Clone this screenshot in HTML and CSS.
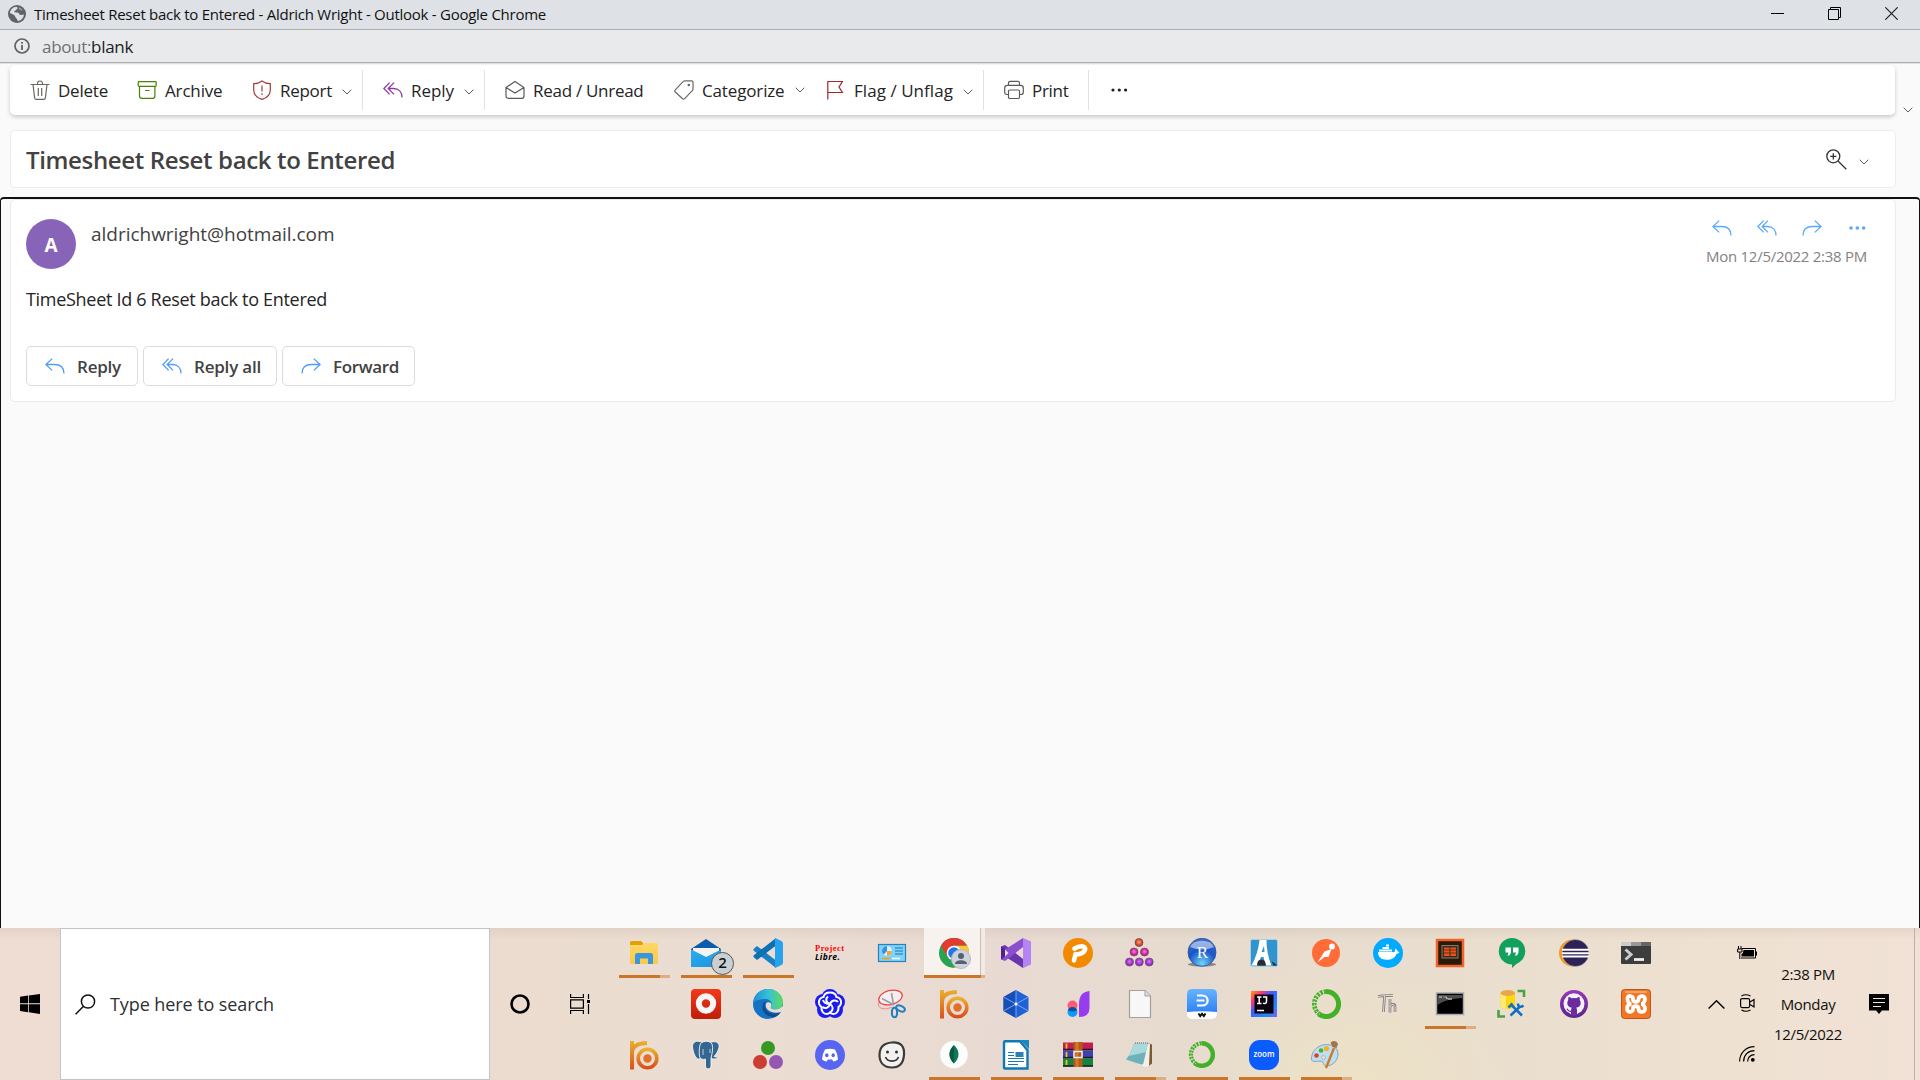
FILE: index.html
```html
<!DOCTYPE html>
<html lang="en">
<head>
<meta charset="utf-8">
<title>Timesheet Reset back to Entered - Aldrich Wright - Outlook</title>
<link rel="stylesheet" href="styles.css">
</head>
<body>
<svg width="0" height="0" class="defs">
  <defs>
    <linearGradient id="g-orange" x1="0" y1="0" x2="0" y2="1"><stop offset="0" stop-color="#e9b02e"/><stop offset="1" stop-color="#d9501e"/></linearGradient>
    <linearGradient id="g-folder" x1="0" y1="0" x2="0" y2="1"><stop offset="0" stop-color="#ffd766"/><stop offset="1" stop-color="#fbc94a"/></linearGradient>
    <linearGradient id="g-edge" x1="0" y1="0" x2="1" y2="0"><stop offset="0" stop-color="#1f8fd6"/><stop offset=".5" stop-color="#35c1d8"/><stop offset="1" stop-color="#5fdc5a"/></linearGradient>
    <linearGradient id="g-ij" x1="0" y1="0" x2="1" y2="1"><stop offset="0" stop-color="#fc9a1d"/><stop offset=".22" stop-color="#fe3867"/><stop offset=".42" stop-color="#3b5fff"/><stop offset=".75" stop-color="#1b8bff"/><stop offset="1" stop-color="#8a5cf0"/></linearGradient>
    <linearGradient id="g-steel" x1="0" y1="0" x2="0" y2="1"><stop offset="0" stop-color="#66b4ff"/><stop offset="1" stop-color="#2f83f7"/></linearGradient>
    <linearGradient id="g-red" x1="0" y1="0" x2="0" y2="1"><stop offset="0" stop-color="#f5371a"/><stop offset="1" stop-color="#c01d08"/></linearGradient>
    <linearGradient id="g-mail" x1="0" y1="0" x2="1" y2="1"><stop offset="0" stop-color="#3ac3f4"/><stop offset="1" stop-color="#1687dd"/></linearGradient>
    <linearGradient id="g-git" x1="0" y1="0" x2="0" y2="1"><stop offset="0" stop-color="#9339b8"/><stop offset="1" stop-color="#5c2590"/></linearGradient>
    <radialGradient id="g-r" cx=".5" cy=".9" r=".9"><stop offset="0" stop-color="#6fd4fa"/><stop offset=".55" stop-color="#1a55c8"/><stop offset="1" stop-color="#3f6fd0"/></radialGradient>
    <radialGradient id="g-ball" cx=".5" cy=".45" r=".6"><stop offset="0" stop-color="#e07bff"/><stop offset=".6" stop-color="#a12fd0"/><stop offset="1" stop-color="#5c2a76"/></radialGradient>
    <radialGradient id="g-ball2" cx=".5" cy=".45" r=".6"><stop offset="0" stop-color="#ff80dd"/><stop offset=".6" stop-color="#d81d9a"/><stop offset="1" stop-color="#6e2658"/></radialGradient>
    <radialGradient id="g-ball3" cx=".5" cy=".45" r=".6"><stop offset="0" stop-color="#ff9d70"/><stop offset=".6" stop-color="#dc4a24"/><stop offset="1" stop-color="#7a3423"/></radialGradient>
    <symbol id="chev" viewBox="0 0 10 6"><path d="M.7.7 5 5 9.300.7" fill="none" stroke="currentColor" stroke-width="1"/></symbol>
    <symbol id="reply" viewBox="0 0 20 16"><path d="M7.200.6.9 6.500l6.300 5.900M1 6.500h8.500c6 0 9.500 3.300 9.500 9" fill="none" stroke="currentColor" stroke-width="1.300"/></symbol>
    <symbol id="replyall" viewBox="0 0 20 16"><path d="M6.600.6.9 6.500l5.700 5.900M11 .6 5.200 6.500l5.800 5.900M5.300 6.500h5c5.500 0 8.700 3.300 8.700 9" fill="none" stroke="currentColor" stroke-width="1.300"/></symbol>
    <symbol id="ro" viewBox="0 0 30 30"><path d="M3 29.500V1M3 13C3 6 8 3.200 18 3" fill="none" stroke="url(#g-orange)" stroke-width="4"/><circle cx="18.500" cy="18.500" r="9.300" fill="none" stroke="url(#g-orange)" stroke-width="3.600"/><circle cx="18.500" cy="18.500" r="4.200" fill="#e0702a"/></symbol>
    <symbol id="ring" viewBox="0 0 30 30"><path d="M15 2.500a12.500 12.500 0 1 1-7 22.800" fill="none" stroke="#43b02a" stroke-width="5"/><path d="M9 25.500A12.500 12.500 0 0 1 15 2.500" fill="none" stroke="#43b02a" stroke-width="4.600" stroke-dasharray="2.600 1"/><path d="M9 25.500A12.500 12.500 0 0 1 15 2.500" fill="none" stroke="#e9ded0" stroke-width="1" stroke-dasharray="1.500 2"/></symbol>
  </defs>
</svg>

<header class="titlebar">
  <svg class="globe" width="18" height="18" viewBox="0 0 18 18"><circle cx="9" cy="9" r="9" fill="#5f6368"/><path d="M8.500 1.800c2 1 .8 2.600-.5 3-.4 1.200-2 1-1.800 2.400 2 .2 4.800 0 5 1.800 0 1 2.600 1.200 4.800.4-.4 3.400-2.600 6-5.800 6.700-1.600-.6-.6-2.600-2.200-3.200-1-.5-.6-2-1.800-2.600C4.800 9.200 3.200 8 1.900 8.200c.4-3.600 3.200-6.300 6.600-6.400z" fill="#dee1e6"/><path d="M10.800 2.200c-.8 1.600 1 2.300 2 3.100.9.700 1.400 0 1.600-.3-.8-1.300-2-2.300-3.600-2.800z" fill="#dee1e6" opacity=".5"/></svg>
  <span class="window-title">Timesheet Reset back to Entered - Aldrich Wright - Outlook - Google Chrome</span>
  <div class="window-buttons">
    <svg width="13" height="13"><path d="M0 6.500h13" stroke="#000"/></svg>
    <svg width="13" height="13" fill="none" stroke="#000"><path d="M.5 2.500h10v10H.5zM2.500 2.500v-2h10v10h-2"/></svg>
    <svg width="13" height="13" fill="none" stroke="#222" stroke-width="1.200"><path d="m.3.3 12.400 12.400M12.700.3.3 12.700"/></svg>
  </div>
</header>
<div class="addressbar">
  <svg width="16" height="16" viewBox="0 0 16 16"><circle cx="8" cy="8" r="7" fill="none" stroke="#5f6368" stroke-width="1.700"/><path d="M8 7v5M8 4v1.800" stroke="#5f6368" stroke-width="1.800"/></svg>
  <span class="url"><span>about:</span>blank</span>
</div>

<main class="page">
  <div class="toolbar-row">
    <nav class="toolbar">
      <div class="tool delete"><svg width="20" height="20" fill="none" stroke="#6a6663" stroke-width="1.200"><path d="M.5 4.500h19M3 4.500l1.600 13.200c.1 1 .8 1.700 1.800 1.700h7.200c1 0 1.700-.7 1.800-1.700L17 4.500M7.500 4C7.500 2 8.500 1 10 1s2.500 1 2.500 3M8.300 8v8M11.700 8v8"/></svg><span>Delete</span></div>
      <div class="tool archive"><svg width="20" height="20" fill="none" stroke="#498205" stroke-width="1.200"><rect x="1.200" y="1.600" width="18" height="4.800" rx=".8"/><path d="M2.500 6.600v9.400c0 1.500 1 2.400 2.400 2.400h10.600c1.500 0 2.400-1 2.400-2.400V6.600M8 10.500h4.500"/></svg><span>Archive</span></div>
      <div class="tool report"><svg width="20" height="20" fill="none" stroke="#a4373a" stroke-width="1.200"><path d="M10 .9c2.600 1.900 5.200 2.700 8.300 2.800v6.200c0 4.600-3 7.800-8.300 9.500-5.300-1.700-8.300-4.900-8.300-9.500V3.700C4.800 3.600 7.400 2.800 10 .9zM10 5.500v6M10 13.200v1.700"/></svg><span>Report</span><svg class="chev low"><use href="#chev"/></svg></div>
      <i class="divider"></i>
      <div class="tool reply"><svg width="20" height="16" color="#8f3a9c"><use href="#replyall"/></svg><span>Reply</span><svg class="chev low"><use href="#chev"/></svg></div>
      <i class="divider"></i>
      <div class="tool read"><svg width="20" height="20" fill="none" stroke="#5c5a58" stroke-width="1.200"><path d="m1 7.500 9-6 9 6v8.500c0 1.400-.8 2.300-2.200 2.300H3.200C1.800 18.300 1 17.400 1 16zM1 7.500l9 5.500 9-5.500"/></svg><span>Read / Unread</span></div>
      <div class="tool categorize"><svg width="20" height="20" fill="none" stroke="#6a6866" stroke-width="1.200"><path d="M11 .8h6.500c1 0 1.500.6 1.500 1.500V9c0 .7-.2 1.200-.7 1.700l-7.600 8c-.7.7-1.400.7-2.100 0L1.300 12c-.7-.7-.7-1.400 0-2.100l8-8.500c.5-.4 1-.6 1.700-.6z"/><circle cx="14.800" cy="5" r=".7" fill="#6a6866"/></svg><span>Categorize</span><svg class="chev"><use href="#chev"/></svg></div>
      <div class="tool flag"><svg width="20" height="20" fill="none" stroke="#a4262c" stroke-width="1.200"><path d="M1.800 19.500V1.500h14.600l-3.400 5.500 3.400 5.500H1.800"/></svg><span>Flag / Unflag</span><svg class="chev low"><use href="#chev"/></svg></div>
      <i class="divider"></i>
      <div class="tool print"><svg width="20" height="20" fill="none" stroke="#5c5a58" stroke-width="1.200"><path d="M4.500 5V3c0-1 .6-1.700 1.700-1.700h7.600c1.100 0 1.700.7 1.700 1.700v2M4.500 14.500H3c-1.500 0-2.300-.8-2.300-2.300V8c0-1.700 1-2.700 2.700-2.700h13.200c1.700 0 2.700 1 2.700 2.700v4.200c0 1.500-.8 2.300-2.300 2.300h-1.500"/><rect x="4.500" y="10" width="11" height="8.500" rx="1.200"/></svg><span>Print</span></div>
      <i class="divider wide"></i>
      <svg class="dots" width="17" height="4" fill="#1f1f1f"><circle cx="2" cy="2" r="1.600"/><circle cx="8.300" cy="2" r="1.600"/><circle cx="14.600" cy="2" r="1.600"/></svg>
    </nav>
    <svg class="chev collapse"><use href="#chev"/></svg>
  </div>

  <section class="subject-card">
    <h1>Timesheet Reset back to Entered</h1>
    <div class="zoom-tools">
      <svg width="21" height="21" viewBox="0 0 21 21" fill="none" stroke="#323130" stroke-width="1.300"><circle cx="7.300" cy="7.300" r="6.500"/><path d="m12 12 8.300 8.300M4.200 7.300h6.200M7.300 4.200v6.200"/></svg>
      <svg class="chev"><use href="#chev"/></svg>
    </div>
  </section>

  <section class="reading-pane">
    <article class="message">
      <div class="avatar">A</div>
      <div class="sender">aldrichwright@hotmail.com</div>
      <div class="message-side">
        <div class="message-actions">
          <svg width="20" height="16"><use href="#reply"/></svg>
          <svg width="20" height="16"><use href="#replyall"/></svg>
          <svg width="20" height="16" class="flip"><use href="#reply"/></svg>
          <svg width="17" height="16" fill="currentColor"><circle cx="2" cy="8" r="1.800"/><circle cx="8.300" cy="8" r="1.800"/><circle cx="14.600" cy="8" r="1.800"/></svg>
        </div>
        <time>Mon 12/5/2022 2:38 PM</time>
      </div>
      <p class="message-text">TimeSheet Id 6 Reset back to Entered</p>
      <div class="buttons">
        <button class="b-reply"><svg width="20" height="16"><use href="#reply"/></svg><span>Reply</span></button>
        <button class="b-all"><svg width="20" height="16"><use href="#replyall"/></svg><span>Reply all</span></button>
        <button class="b-forward"><svg width="20" height="16" class="flip"><use href="#reply"/></svg><span>Forward</span></button>
      </div>
    </article>
  </section>
</main>

<footer class="taskbar">
  <div class="start"><svg width="20" height="20" viewBox="0 0 20 20"><path d="M0 2.800 8 1.600v7.700H0zM8.800 1.500 20 0v9.300H8.800zM0 10.200h8v8L0 17zM8.800 10.200H20V20L8.800 18.300z"/></svg></div>
  <div class="search"><svg width="21" height="21" viewBox="0 0 21 21" fill="none" stroke="#111" stroke-width="1.500"><circle cx="13" cy="7.500" r="6.600"/><path d="M8.500 12.300.6 20.300"/></svg><span>Type here to search</span></div>
  <svg class="cortana" width="20" height="20" fill="none" stroke="#000" stroke-width="2.600"><circle cx="10" cy="10" r="8.500"/></svg>
  <svg class="taskview" width="20" height="20" fill="none" stroke="#000" stroke-width="1.200"><path d="M.6 0v3.500h12.800V0M.6 5.800h12.800v8.400H.6zM.6 20v-3.500h12.800V20M18.500 0v5M18.500 10v10"/><path d="M17 7.500h3" stroke-width="3"/></svg>

  <div class="apps">
    <div class="app split"><svg viewBox="0 0 30 30"><path d="M1 4.500Q1 3 2.500 3H12l2 2v4H1z" fill="#e2a100"/><path d="M1 7h12l2-2h12.500Q29 5 29 6.500v18q0 1.500-1.500 1.500h-25Q1 26 1 24.500z" fill="url(#g-folder)"/><path d="M6 26v-8.500Q6 15 8.500 15h13q2.500 0 2.500 2.500V26h-5v-5.500h-8V26z" fill="#3a96dd"/></svg></div>
    <div class="app run"><svg viewBox="0 0 30 30"><path d="M0 11 15 1l15 10v17H0z" fill="#0a5cad"/><path d="M2 10h26v5L15 21 2 15z" fill="#f4f3f1"/><path d="M0 11.500 15 19l15-7.500V29H0z" fill="url(#g-mail)"/><path d="M15 19 30 29H0V11.500z" fill="#1f9be6" opacity=".55"/></svg></div>
    <div class="app run"><svg viewBox="0 0 30 30"><path d="m.5 11 3.500-3L23 22.500V30L.5 12.500z" fill="#1a7fc4"/><path d="M.5 19 4 22 23 7.500V0L.5 17.500z" fill="#0c70b4"/><path d="m22 0 6.500 3Q30 4 30 5.500v19q0 1.500-1.500 2.500L22 30z" fill="#26a3ee"/></svg></div>
    <div class="app"><svg viewBox="0 0 30 30"><text x="0" y="13" font-family="Liberation Serif, serif" font-weight="700" font-size="8.500" fill="#f00" textLength="29">Project</text><text x="0" y="21.500" font-family="Open Sans, sans-serif" font-style="italic" font-weight="700" font-size="8.500" textLength="25">Libre.</text></svg></div>
    <div class="app"><svg viewBox="0 0 30 30"><rect x="1.500" y="6.500" width="27" height="17" fill="#7ed3fa" stroke="#2b80b8" stroke-width="1.200"/><circle cx="10" cy="13" r="5" fill="#d8effc"/><path d="M10 13V8a5 5 0 0 0-3.500 8.500z" fill="#3a8fdf"/><path d="M10 13h5a5 5 0 0 1-5 5z" fill="#f7a531"/><path d="M18 10h8M18 13h8M18 16h8" stroke="#3c94d0" stroke-width="1.500"/><path d="M5 20.500h8" stroke="#f59a1e" stroke-width="1.600"/><path d="M15 20.500h8" stroke="#fff" stroke-width="1.500"/></svg></div>
    <div class="app active"><svg viewBox="0 0 30 30"><circle cx="15" cy="15" r="15" fill="#2aa252"/><path d="M15 7.500h13A15 15 0 0 1 15 30l6.500-11.500z" fill="#fcc934"/><path d="M2 7.500A15 15 0 0 1 28 7.500H15L8.500 18.700z" fill="#e33b2e"/><circle cx="15" cy="15" r="7.300" fill="#fff"/><circle cx="15" cy="15" r="5.800" fill="#2574e8"/></svg><svg class="profile" viewBox="0 0 20 20"><circle cx="10" cy="10" r="9.500" fill="#ccd3dc" stroke="#b3bac3"/><circle cx="10" cy="7" r="3" fill="#56606e"/><path d="M4 15c0-5 12-5 12 0z" fill="#56606e"/></svg></div>
    <div class="app"><svg viewBox="0 0 30 30"><path d="M0 8.500 4 7l18 14v9L4 18.500 0 21.500z" fill="#6a35ad"/><path d="M0 21.500 4 23 22 9V0L4 11.500z" fill="#8a4fd0"/><path d="M0 8.500v13l4-3v-7z" fill="#52218f"/><path d="M4 11.500v7l3.500-3.500z" fill="#e9ddd3"/><path d="m22 0 8 3.500v23L22 30z" fill="#b384f2"/></svg></div>
    <div class="app"><svg viewBox="0 0 30 30"><circle cx="15" cy="15" r="15" fill="#f18a00"/><path d="M11 22.500 12.500 16M11.500 10.500q6-3.500 9.500-1.500c2.500 2.500.5 7-8.500 7.500" fill="none" stroke="#fff" stroke-width="4.600" stroke-linecap="round" stroke-linejoin="round"/></svg></div>
    <div class="app"><svg viewBox="0 0 30 30" stroke="#6f5670" stroke-width=".8"><circle cx="14" cy="4.500" r="4" fill="url(#g-ball3)"/><g fill="url(#g-ball2)"><circle cx="9" cy="14" r="4"/><circle cx="19.500" cy="14" r="4"/></g><g fill="url(#g-ball)"><circle cx="4.500" cy="24" r="4"/><circle cx="14.300" cy="24" r="4"/><circle cx="24.200" cy="24" r="4"/></g></svg></div>
    <div class="app"><svg viewBox="0 0 30 30"><ellipse cx="15" cy="26.500" rx="14" ry="2" fill="#8d8780"/><circle cx="15" cy="14.300" r="14" fill="url(#g-r)" stroke="#27529d" stroke-width=".8"/><path d="M3 9a13 10 0 0 1 24 0q-12 5-24 0z" fill="#fff" opacity=".5"/><text x="15.500" y="20" text-anchor="middle" font-family="Liberation Serif, serif" font-size="17" fill="#fff">R</text></svg></div>
    <div class="app"><svg viewBox="0 0 30 30"><rect x="1.500" y="1.500" width="27" height="27" rx="2" fill="#3294cf" stroke="#a9cfe6"/><path d="M10.500 2h7c0 9 1.500 17 5 25.500h-6q-1-4-2-8.500h-2.500q-2 5-3 8.500H2.500Q9 16 10.500 2z" fill="#fff"/><path d="M12.500 14h3L15 8z" fill="#3294cf"/><path d="M8 27.500q0-6 4.500-6 4 0 4.500 6zM22.500 23l6 4.500h-4z" fill="#2a2c30"/></svg></div>
    <div class="app"><svg viewBox="0 0 30 30"><circle cx="15" cy="15" r="14" fill="#ff6c37"/><circle cx="21" cy="8.500" r="3" fill="#fff"/><path d="M20.500 11 13.500 13.500 6.500 24.500l7-5.500 4 0z" fill="#fff"/></svg></div>
    <div class="app"><svg viewBox="0 0 30 30"><circle cx="15" cy="15" r="15" fill="#00aaff"/><path d="M5 14h16c1 0 1.500-2 1-3.500 1.500.5 2.500 1.700 2.500 3 .8 0 1.500.2 2 .6-.6 1.200-1.700 1.700-3 1.600-1.500 4-4.500 6-10 6-5 0-8.500-2.500-8.500-7.700z" fill="#fff"/><path d="M6 12.500h13M9.500 10h6.500M13 7.500h3" stroke="#fff" stroke-width="2.200"/></svg></div>
    <div class="app"><svg viewBox="0 0 30 30"><rect x="2" y="2" width="26" height="26" fill="#2b1a05" stroke="#f2622b" stroke-width="2.500"/><rect x="7" y="7.500" width="16" height="12.500" fill="#3a2b1c" stroke="#85796c"/><path d="M9 9.500h5.500V18H9zM15.500 9.500H21V18h-5.500z" fill="#e8531b"/><path d="M9 12h12M9 15h12" stroke="#5a2408" stroke-width=".8"/></svg></div>
    <div class="app"><svg viewBox="0 0 30 30"><circle cx="15" cy="13.200" r="13.200" fill="#12a05c"/><path d="M15 24h6.500l-6.500 6z" fill="#12a05c"/><path d="M8.500 9.500h5.500v5l-1.500 3h-2l1-3H8.500zM16 9.500h5.500v5l-1.500 3h-2l1-3H16z" fill="#fff"/></svg></div>
    <div class="app"><svg viewBox="0 0 30 30"><circle cx="13.500" cy="15" r="13.500" fill="#f39a22"/><circle cx="16.500" cy="15" r="13.500" fill="#2c2255" stroke="#e9ddd0" stroke-width=".4"/><path d="M3 11.800h27M3 15.200h27M3 18.600h27" stroke="#fff" stroke-width="2"/></svg></div>
    <div class="app"><svg viewBox="0 0 30 30"><rect y="4" width="30" height="22" rx="1" fill="#3d3d3d"/><path d="M0 4h10v4H0z" fill="#ccc"/><path d="M10 4h10v4H10z" fill="#999"/><path d="M20 4h10v4H20z" fill="#666"/><path d="m4.500 11.500 5.500 5-5.500 5" fill="none" stroke="#ccc" stroke-width="3"/><path d="M13 21.500h10" stroke="#eee" stroke-width="2.800"/></svg></div>

    <div class="app"></div>
    <div class="app"><svg viewBox="0 0 30 30"><rect width="30" height="30" rx="4" fill="url(#g-red)"/><circle cx="15" cy="14.500" r="7.200" fill="none" stroke="#f6f6f6" stroke-width="6"/></svg></div>
    <div class="app"><svg viewBox="0 0 30 30"><circle cx="15" cy="15" r="15" fill="#1672c4"/><path d="M.2 13.500C1 5.500 7 0 15 0c9 0 15 6.500 15 13 0 5-3.500 7.500-8 7.500-4 0-5-1.500-3.500-3.500C20 14 17 10 12.500 10 7 10 2 12 .2 13.500z" fill="url(#g-edge)"/><path d="M11 13c-4 5 0 15 9 15 3 0 6-2 8-5-3 1.500-7 2-10 1-5-1.500-7.500-6-5.500-11z" fill="#124a91"/><path d="M13 14.500c2.500-3 6.500-.5 5.300 2.500-1.300 2-.3 3.500 3.700 3.500 3 0 5.500-1 7.500-3.500L30.500 19l-2.500 4c-4 1-8 1-11.500-1-3-2-4.300-4.500-3.500-7.500z" fill="#e9dcd3"/></svg></div>
    <div class="app"><svg viewBox="0 0 30 30"><g fill="#1c1cf0"><circle cx="15" cy="8.500" r="8.500"/><circle cx="8" cy="13" r="8"/><circle cx="22" cy="13" r="8"/><circle cx="10" cy="21" r="8"/><circle cx="20" cy="21" r="8"/></g><g fill="none" stroke="#fff" stroke-width="2"><path d="M15 3.500c4.500 0 6 2.500 6.500 4.500 3.500.5 5 3.500 4.500 6.500-.5 2-1.500 3-2.500 3.500.5 4-2 7-5 7-1.500 0-2.500-.5-3.500-1.500-1 1-2 1.500-3.500 1.500-3 0-5.500-3-5-7-1-.5-2-1.500-2.500-3.500-.5-3 1-6 4.500-6.500.5-2 2-4.500 6.500-4.500z"/><path d="M15 15c-4-1-5-5-2-7.500M15 15c1.500-4 6-4.500 8-2M15 15c3.500 2 3.500 6 .5 8M15 15c-1 4-5 5-7.500 3M15 15c-3 0-6-.5-7-4"/></g></svg></div>
    <div class="app"><svg viewBox="0 0 30 30" fill="none"><path d="M2 13c-3 6 5 9 13 5" stroke="#eb8a8a" stroke-width="1"/><ellipse cx="13.500" cy="8.500" rx="12" ry="7" transform="rotate(-15 13.500 8.500)" fill="#f4eeec" stroke="#e8434a" stroke-width="1.300"/><path d="m5 9.500 12 6.500M14.500 4l2 12" stroke="#9aa0a6" stroke-width="1.600"/><g stroke="#1f7fc4" stroke-width="2"><ellipse cx="17.500" cy="23.500" rx="2.600" ry="4.800"/><ellipse cx="23.500" cy="19.500" rx="2.600" ry="4.600" transform="rotate(-65 23.500 19.500)"/></g></svg></div>
    <div class="app"><svg><use href="#ro"/></svg></div>
    <div class="app"><svg viewBox="0 0 30 30"><path d="m15 1 12.500 7v14L15 29 2.500 22V8z" fill="#1f62d8"/><path d="M15 1v28L2.500 22V8z" fill="#184fb5"/><path d="M15 1v28M2.500 8 27.500 22M27.500 8 2.500 22" stroke="#7fb0fa" stroke-width=".9"/><circle cx="15" cy="15" r="1.500" fill="#fff"/></svg></div>
    <div class="app"><svg viewBox="0 0 30 30"><circle cx="9.500" cy="16.500" r="5" fill="#ff5c74"/><circle cx="9.500" cy="23" r="5" fill="#0a9bff"/><path d="M5 20.500c2-3.500 7-3.500 9 0-2 2.800-7 2.800-9 0z" fill="#0b4f9e"/><path d="M16 28V15Q16 3 26.500 2v17q0 9-10.500 9z" fill="#963df0"/></svg></div>
    <div class="app"><svg viewBox="0 0 30 30"><path d="M4.500 1.500H20l5.500 5.500v21.500h-21z" fill="#f7f7f7" stroke="#a3a19e" stroke-width="1.200"/><path d="M20 1.500V7h5.500" fill="#ddd" stroke="#a3a19e"/></svg></div>
    <div class="app"><svg viewBox="0 0 30 30"><rect width="30" height="30" rx="5" fill="#fff"/><path d="M0 23V5q0-5 5-5h20q5 0 5 5v18q-15-1.500-30 0z" fill="url(#g-steel)"/><path d="M10 6.500h5c7.500 0 7.500 10 0 10h-5M9.500 11.500h8" fill="none" stroke="#fff" stroke-width="2.200"/><path d="m11.500 24.500 1.700 2.500 1.800-2.200 1.800 2.200 1.700-2.500" fill="none" stroke="#111" stroke-width="2"/></svg></div>
    <div class="app"><svg viewBox="0 0 30 30"><rect x="2" y="2" width="26" height="26" fill="url(#g-ij)"/><rect x="5.500" y="5.500" width="19" height="19" fill="#0b0410"/><path d="M8 8h4.500M8 14.500h4.500M10.200 8v6.500M14 8h3.500v4.500c0 2-2 2.500-3.500 1.500M8 21.500h7" stroke="#fff" stroke-width="1.500" fill="none"/></svg></div>
    <div class="app"><svg><use href="#ring"/></svg></div>
    <div class="app"><svg viewBox="0 0 30 30" fill="none" stroke="#77747a"><path d="M5 7.500c5-1 10-1 15-1M11.500 7 10.500 23M17 10v13.500M17 18c2-4 5-3 5-.5V23" stroke-width="2.600"/><path d="M5 7.500c5-1 10-1 15-1M11.500 7 10.500 23M17 10v13.500M17 18c2-4 5-3 5-.5V23" stroke="#e6dfd6" stroke-width="1"/></svg></div>
    <div class="app split"><svg viewBox="0 0 30 30"><rect x="1.500" y="4" width="27" height="21.500" fill="#000" stroke="#a9abad" stroke-width="1.500"/><path d="M2.300 6h25.400v3Q10 10 2.300 16z" fill="#4d4d4d"/><path d="M4 8h3M8.500 8h1M10.500 7.500l2 2.500M13 10h4" stroke="#ddd" stroke-width="1.200"/></svg></div>
    <div class="app"><svg viewBox="0 0 30 30"><path d="M3.500 4.500v13c0 3 14.500 3 14.500 0v-13z" fill="#fdd80d"/><path d="M3.500 4.500v13c0 1 2.500 2 5.500 2v-15z" fill="#ffe873"/><ellipse cx="10.800" cy="4" rx="7.300" ry="3" fill="#e8a64b"/><path d="M20.500 2H27v6M1.500 21v6.500H8" fill="none" stroke="#4aa244" stroke-width="2.600"/><path d="m13.500 26.500 9-8.500M25 26.500 14.500 16" stroke="#0f70c4" stroke-width="2.500"/><path d="m11.500 18.500 4-4M21 14.500c0 4 3 4 5.500 2" stroke="#0f70c4" stroke-width="2.500" fill="none"/></svg></div>
    <div class="app"><svg viewBox="0 0 30 30"><circle cx="15" cy="15" r="14" fill="url(#g-git)"/><circle cx="15" cy="14.800" r="10.500" fill="#f7f2fa"/><path d="M12 25.500V21q.2-1.700 1-2.300c-3-.4-4.700-2-4.700-4.800q0-1.700 1-2.900-.3-1.500.2-3 1.500 0 3 1.200 2.500-.6 5 0Q19 8 20.500 8q.5 1.500.2 3 1 1.200 1 2.900c0 2.800-1.700 4.400-4.700 4.800.8.600 1 1.300 1 2.300v4.500z" fill="#6b2b9e"/><path d="M12 22.300q-2.500.5-4-2.500" stroke="#6b2b9e" stroke-width="1.300" fill="none"/></svg></div>
    <div class="app"><svg viewBox="0 0 30 30"><rect x=".5" y=".5" width="29" height="29" rx="3" fill="#f37623" stroke="#b9571b"/><path d="M4 3h22" stroke="#f9a56c" stroke-width="2"/><path d="M6.500 9.500c0-4 6-3 5.500 1 0 3 5.500 3 5.500 0 0-4.500 6.500-4.500 6.500-.5 0 2-1.500 5-4 5 2.500 0 4 2.500 4 5 0 4-6.500 4-6.500-.5 0-3-5.500-3-5.500 0 .5 4.500-6 4.500-6 0 0-2.500 1.500-4.500 4.500-4.500-2.500 0-4-2.500-4-5z" fill="none" stroke="#fff" stroke-width="3.800"/></svg></div>

    <div class="app"><svg><use href="#ro"/></svg></div>
    <div class="app"><svg viewBox="0 0 30 30"><g fill="#336791" stroke="#f6f3ef" stroke-width=".9"><path d="M11 2.500C6-.5 1 2 1.500 7c.5 5 3 12 6 12 2 0 3-2 4-4z"/><path d="M19 2.500c5-2 10-.5 9 5-1 4-3 7-5 9 2 1 4 0 4 1-2 2-6 2-7 0z"/><path d="M9.500 3.500C13 .5 18.500.5 21 4c1.500 4 0 10-1 14v8c0 3.500-5.500 4-5.500 0v-7c-3 1-5.500 0-6-3-.5-4-.5-8 1-12.500z"/></g><path d="M12 9v6M19 9v4" stroke="#dfe8ef" stroke-width=".8"/></svg></div>
    <div class="app"><svg viewBox="0 0 30 30"><circle cx="15" cy="8" r="7" fill="#389826"/><circle cx="7" cy="22" r="7" fill="#cb3c33"/><circle cx="23" cy="22" r="7" fill="#9558b2"/></svg></div>
    <div class="app"><svg viewBox="0 0 30 30"><circle cx="15" cy="15" r="15" fill="#5865f2"/><path d="M10 9.500q5-1.300 10 0 2.800 4.500 3 10-2.500 1.800-4.800 2l-1-2h-4.400l-1 2q-2.300-.2-4.800-2 .2-5.500 3-10z" fill="#fff"/><ellipse cx="11.800" cy="15.300" rx="1.700" ry="2" fill="#5865f2"/><ellipse cx="18.200" cy="15.300" rx="1.700" ry="2" fill="#5865f2"/></svg></div>
    <div class="app"><svg viewBox="0 0 30 30"><path d="M15 2.500c9-.5 12.500 4 12 12-.5 9-4.500 13-12 13S2.500 23 2.500 15 7 3 15 2.500z" fill="#f3f1ef" stroke="#3a3a3a" stroke-width="2.200"/><circle cx="10.500" cy="12" r="1.500" fill="#333"/><circle cx="19.500" cy="12" r="1.500" fill="#333"/><path d="M8.500 17c2 5.500 11 5.500 13 0" fill="none" stroke="#333" stroke-width="1.600"/></svg></div>
    <div class="app run"><svg viewBox="0 0 30 30"><circle cx="15" cy="14.500" r="13.800" fill="#fcfcfb"/><path d="M15 5c6.500 6.500 5.500 13 0 18.500C9.500 18 8.500 11.500 15 5z" fill="#10795b"/><path d="M15 5c-6.500 6.500-5.500 13 0 18.500z" fill="#0a5a43"/></svg></div>
    <div class="app run"><svg viewBox="0 0 30 30"><path d="M4 1.300h15l7.500 9v18.200H4q-1 0-1-1v-25q0-1 1-1.200z" fill="#fff" stroke="#0e7ab5" stroke-width="2.400"/><path d="M19 0h9v9z" fill="#1986c4"/><path d="M7 12.500h6M7 15.500h6M7 18.500h16M7 21.500h16M7 24.500h10" stroke="#1578b0" stroke-width="1.200"/><path d="M14.500 12h8v5h-8z" fill="#2b7fb5"/></svg></div>
    <div class="app run"><svg viewBox="0 0 30 30"><path d="M0 2.500h30v8H0z" fill="#c21f4c"/><path d="M0 10.500h30v8H0z" fill="#4040b5"/><path d="M0 18.500h30v8H0z" fill="#14843c"/><path d="M0 9.500h30M0 17.500h30M0 26h30" stroke="#1d1b2b" stroke-width="1.600"/><path d="M10.500 2h9v25h-9z" fill="#b55a16"/><path d="M12.500 2h3v25h-3z" fill="#d0782c"/><rect x="11" y="11.500" width="8" height="6" fill="none" stroke="#eee" stroke-width="1.500"/><path d="M3.500 3.500v5M3.500 12v5M3.500 20v5" stroke="#f3c317" stroke-width="1.800"/></svg></div>
    <div class="app split"><svg viewBox="0 0 30 30"><path d="m23 3 4 1.500v19l-4 3z" fill="#7e5a30"/><path d="m22.500 3 2.500 1-1 22-3 1-8-3z" fill="#f2f0e8"/><path d="M9 3.500 23 3l-4.500 20q-.5 2-2.500 1.500L1 19.500Q6 14 9 3.500z" fill="#6db2bb"/><path d="M9 3.500 23 3l-2 9-17 4Q7 11 9 3.500z" fill="#a9d9dd"/><path d="M10 3h13" stroke="#7d8a8c" stroke-dasharray="1 1" stroke-width="1.500"/></svg></div>
    <div class="app run"><svg class="small"><use href="#ring"/></svg></div>
    <div class="app run"><svg viewBox="0 0 30 30"><rect width="30" height="30" rx="11" fill="#0b5cff"/><text x="15" y="17.300" text-anchor="middle" font-family="Open Sans, sans-serif" font-weight="600" font-size="8" fill="#fff" textLength="21" lengthAdjust="spacingAndGlyphs">zoom</text></svg></div>
    <div class="app split"><svg viewBox="0 0 30 30"><path d="M12 5c9-2 15 3 15 9 0 7-6 12-12 12-3 0-2-5-5-5-4 0-9 2-9.500-2C.5 13 4 7 12 5z" fill="#bfdff0" stroke="#7ba7c0"/><circle cx="12.500" cy="17.500" r="2" fill="#e9dfd2" stroke="#7ba7c0" stroke-width=".6"/><circle cx="5.500" cy="15.500" r="2.300" fill="#d8402c"/><circle cx="10" cy="10.500" r="2.300" fill="#4bae3d"/><circle cx="15.500" cy="8.500" r="2.600" fill="#f0b323"/><path d="m15 28 8-20" stroke="#cf7a2a" stroke-width="2.400"/><path d="M19.500 2.500Q25-1 27 4l-1.500 4-4-1z" fill="#a0754c"/></svg></div>
  </div>

  <svg class="tray-chev" width="17" height="9" fill="none" stroke="#000" stroke-width="1.400"><path d="m.6 8.400 7.900-7.700 7.900 7.700"/></svg>
  <div class="tray">
    <svg width="20" height="13" viewBox="0 0 20 13"><path d="M5 2.500h13.500v9.500H4" fill="none" stroke="#000"/><path d="M6.500 4H17v6.500H4.500V8q2-1 2-4z"/><path d="M19 5.500h1v4h-1z"/><path d="M1.500 0v3M4 0v3M.6 3h4.400v3H.6zM2.800 6v7" stroke="#000" fill="#efe2d3"/></svg>
    <svg width="15" height="18" viewBox="0 0 15 18" fill="none" stroke="#000" stroke-width="1.200"><rect x=".6" y="4.600" width="9" height="9" rx="1.500"/><path d="m10 8 4-2.500v7.500L10 10.500M1.500 2Q5.500-.5 10.500 2M1.500 16q4 2.500 9 0"/></svg>
    <svg width="16" height="16" viewBox="0 0 16 16" fill="none" stroke="#000" stroke-width="1.200"><path d="M.6 15.500C.6 7 7 .6 15.500.6M4.600 15.500C4.600 9 9 4.600 15.500 4.600M8.600 15.500c0-4 3-6.900 6.900-6.900"/><circle cx="13.800" cy="13.800" r="1.300" fill="#000"/></svg>
  </div>
  <div class="clock"><span>2:38 PM</span><span>Monday</span><span>12/5/2022</span></div>
  <svg class="notify" width="20" height="20" viewBox="0 0 20 20"><path d="M0 0h20v16.500h-7L10 20l-3-3.500H0z"/><path d="M4 4.500h12M4 8.500h12M4 12.500h8" stroke="#f1e4d8" stroke-width="1.100"/></svg>
  <i class="peek"></i>
</footer>
</body>
</html>
```
FILE: styles.css
```css
* { box-sizing: border-box; }
body {
  margin: 0;
  width: 1920px;
  height: 1080px;
  overflow: hidden;
  display: flex;
  flex-direction: column;
  font-family: "Open Sans", "Noto Sans", sans-serif;
  color: #242424;
  background: #fafafa;
}
.defs { position: absolute; }
svg { display: block; flex: none; }
span, time, h1 { white-space: nowrap; }

.titlebar {
  height: 30px;
  flex: none;
  display: flex;
  align-items: center;
  padding: 0 16px 2px 8px;
  background: #dee1e6;
  border-bottom: 1px solid #acaeb1;
}
.window-title { margin-left: 8px; font-size: 15px; letter-spacing: -.261px; color: #111; }
.window-buttons { margin-left: auto; display: flex; gap: 44px; margin-right: 6px; }

.addressbar {
  height: 33px;
  flex: none;
  display: flex;
  align-items: center;
  padding: 0 14px;
  background: #e9eaeb;
  border-bottom: 1px solid #acaeb1;
}
.addressbar svg { margin-right: 12px; }
.url { font-size: 17px; letter-spacing: -.321px; color: #202124; }
.url span { color: #6d7175; }

.page { flex: 1; display: flex; flex-direction: column; min-height: 0; }
.toolbar-row { display: flex; height: 67px; flex: none; padding-top: 1px; border-top: 1px solid #e2e2e2; }
.toolbar {
  margin-left: 10px;
  width: 1885px;
  height: 50px;
  display: flex;
  align-items: center;
  padding-left: 20px;
  background: #fff;
  border-radius: 5px;
  box-shadow: 0 2px 4px rgba(0, 0, 0, .2);
}
.tool { display: flex; align-items: center; height: 50px; font-size: 17px; }
.tool span { margin-left: 8px; }
.delete { width: 107px; letter-spacing: -.221px; }
.archive { width: 115px; letter-spacing: -.158px; }
.report { width: 110px; letter-spacing: -.281px; }
.reply { width: 101px; letter-spacing: -.05px; }
.read { width: 169px; letter-spacing: -.279px; }
.categorize { width: 152px; letter-spacing: -.148px; }
.flag { width: 157px; letter-spacing: .052px; }
.print { width: 84px; letter-spacing: -.291px; }
.divider { width: 1px; height: 40px; margin-right: 20px; background: #e1e1e1; }
.divider.wide { margin-right: 22px; }
.chev { width: 10px; height: 6px; color: #605e5c; }
.tool .chev { margin-left: 10px; }
.tool .chev.low { margin-top: 4px; }
.collapse { margin: 42px 0 0 8px; }

.subject-card {
  height: 58px;
  flex: none;
  width: 1886px;
  margin-left: 10px;
  padding: 0 26px 0 15px;
  display: flex;
  align-items: center;
  justify-content: space-between;
  background: #fff;
  border: 1px solid #ededed;
  border-radius: 5px;
}
.subject-card h1 { margin: 0; font-size: 24px; font-weight: 600; letter-spacing: -.352px; color: #424242; }
.zoom-tools { display: flex; align-items: center; gap: 12px; }
.zoom-tools .chev { margin-top: 6px; }

.reading-pane {
  flex: 1;
  min-height: 0;
  margin-top: 9px;
  border: solid #111;
  border-width: 2px 1px 0 1px;
  border-radius: 4px 4px 0 0;
}
.message {
  width: 1886px;
  height: 203px;
  margin-left: 9px;
  padding: 19px 27px 15px 15px;
  display: grid;
  grid-template-columns: 50px 1fr auto;
  grid-template-rows: 50px 56px 40px;
  row-gap: 10px;
  background: #fff;
  border: 1px solid #ebebeb;
  border-radius: 5px;
}
.avatar {
  width: 50px;
  height: 50px;
  border-radius: 50%;
  background: #8764b8;
  color: #fff;
  font-size: 19px;
  font-weight: 700;
  line-height: 52px;
  text-align: center;
}
.sender { margin-left: 15px; font-size: 19px; line-height: 30px; letter-spacing: -.022px; color: #424242; }
.message-side { display: flex; flex-direction: column; align-items: flex-end; }
.message-actions { display: flex; gap: 25px; margin: 1px 2px 0 0; color: #5aa9ff; }
.message-actions svg:last-child { margin-left: 2px; }
.flip { transform: scaleX(-1); }
time { margin: 9px 1px 0 0; font-size: 15px; line-height: 22px; letter-spacing: -.269px; color: #848280; }
.message-text { grid-column: 1 / -1; margin: 7px 0 0; font-size: 18px; line-height: 26px; letter-spacing: -.302px; }
.buttons { grid-column: 1 / -1; display: flex; gap: 5px; margin-top: 1px; height: 40px; }
button {
  display: flex;
  align-items: center;
  height: 40px;
  padding: 0 0 0 18px;
  background: #fff;
  border: 1px solid #dcdcdc;
  border-radius: 5px;
  font: 600 17px "Open Sans", "Noto Sans", sans-serif;
  color: #424242;
}
button svg { margin-right: 12px; color: #4f9df8; }
.b-reply { width: 112px; letter-spacing: -.216px; }
.b-all { width: 134px; letter-spacing: -.205px; }
.b-forward { width: 133px; letter-spacing: -.346px; }

.taskbar {
  height: 152px;
  flex: none;
  display: flex;
  align-items: center;
  background:
    linear-gradient(rgba(90, 70, 50, .07), transparent 12px),
    radial-gradient(ellipse 170px 120px at 1350px 100%, rgba(240, 230, 190, .6), transparent),
    linear-gradient(90deg, #efddd4 0, #ebdccf 27%, #ecddd3 40%, #e8dad2 52%, #e7dbcf 62%, #eadecf 77%, #eee1d1 90%, #f1e1d6 100%);
}
.start { width: 60px; padding-left: 20px; }
.search {
  width: 430px;
  height: 152px;
  display: flex;
  align-items: center;
  padding-left: 14px;
  background: #fff;
  border: 1px solid #c4c4c4;
  font-size: 18px;
  letter-spacing: -.086px;
  color: #303030;
}
.search span { margin-left: 14px; }
.cortana { margin-left: 20px; }
.taskview { margin: 0 23px 0 40px; }

.apps { display: grid; grid-template-columns: repeat(17, 62px); grid-template-rows: 50px 51px 51px; }
.app { position: relative; display: flex; padding: 10px 0 0 16px; }
.app:nth-child(n+18) { padding-top: 11px; }
.app > svg { width: 30px; height: 30px; }
.app > svg.small { width: 27px; height: 27px; margin: 1px; }
.run, .split, .active { background: linear-gradient(#cb7529, #cb7529) 6px 100% / 51px 3px no-repeat; }
.split { background: linear-gradient(90deg, #cb7529 41px, #dfad82 41px) 6px 100% / 51px 3px no-repeat; }
.active {
  margin: 0 -1px 0 1px;
  padding-left: 15px;
  background: linear-gradient(90deg, #cb7529 57px, #dfad82 57px) 0 100% / 61px 3px no-repeat,
    linear-gradient(90deg, #f7f2ee 56px, #c9beb6 56px 57px, #f2eae4 57px) 0 0 / 61px 100% no-repeat;
}
.app .profile { position: absolute; left: 27px; top: 21px; width: 20px; height: 20px; }
.run:nth-child(2)::after {
  content: "2";
  position: absolute;
  left: 36px;
  top: 24px;
  width: 21px;
  height: 21px;
  border: 1px solid #555;
  border-radius: 50%;
  background: #c9d0d4;
  font-size: 15px;
  font-weight: 600;
  line-height: 19px;
  text-align: center;
  color: #111;
}

.tray-chev { margin-left: 41px; }
.tray { margin-left: 12px; width: 20px; height: 116px; display: flex; flex-direction: column; align-items: center; justify-content: space-between; }
.clock { width: 70px; margin-left: 16px; display: flex; flex-direction: column; align-items: center; font-size: 15px; line-height: 30px; letter-spacing: -.34px; color: #111; }
.notify { margin-left: 26px; }
.peek { width: 1px; height: 152px; margin-left: 25px; background: #bdb0a6; }
```
